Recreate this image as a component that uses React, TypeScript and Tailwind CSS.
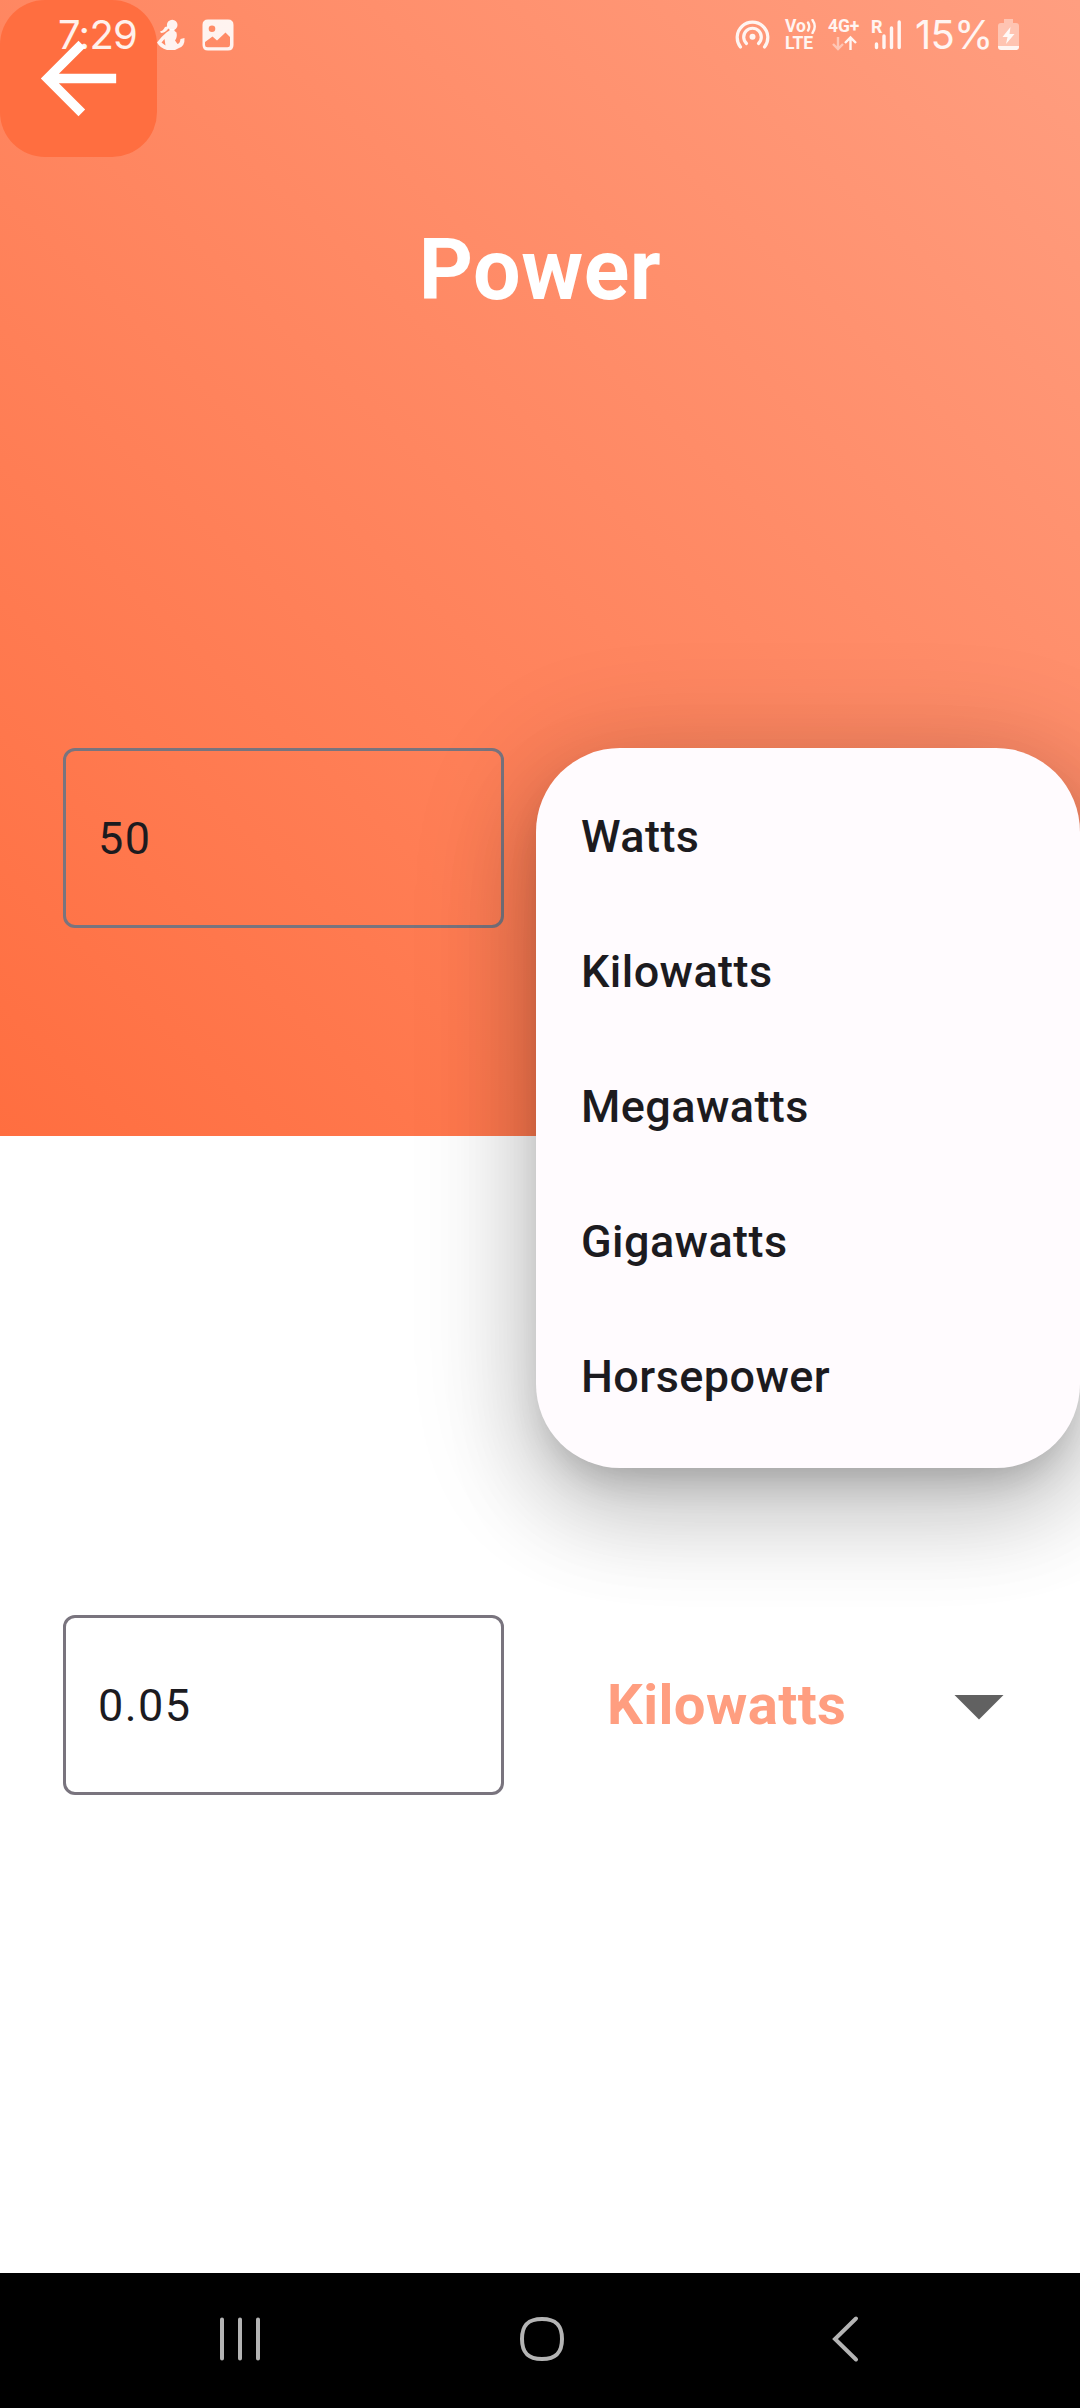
import type { ReactNode } from "react";

const units = ["Watts", "Kilowatts", "Megawatts", "Gigawatts", "Horsepower"];

function StatusBar() {
  return (
    <div className="absolute inset-x-0 top-0 z-20 flex h-[69px] items-center text-white/90">
      <span className="ml-[58px] w-[81px] whitespace-nowrap font-[Inter] text-[40px] leading-none font-normal tracking-[-0.7px]">
        7:29
      </span>
      <svg className="ml-[17px] h-[34px] w-[30px]" viewBox="0 0 30 34" fill="currentColor">
        <circle cx="16.200" cy="7" r="5.300" />
        <path d="M13 8 9 9Q7 13 4 13.500L5 15Q9 15 12 11Z" />
        <path d="M14 11H18Q18 13 20.500 14.500Q21.500 19 19 22.500L21.500 26Q24 25.500 24.500 21L28.500 20Q29 28 23 30L19 32H11Q4 30 1 24.500Q5 19 11 14Q14 13 14 11ZM8.500 21 5.500 24.500 9.500 27.500Z" fillRule="evenodd" />
      </svg>
      <svg className="ml-[16px] h-[32px] w-[32px]" viewBox="0 0 32 32" fill="currentColor">
        <path
          fillRule="evenodd"
          d="M6 0.5H26Q31.5 .5 31.5 6V26Q31.5 31.5 26 31.5H6Q.5 31.5 .5 26V6Q.5 .5 6 .5ZM10 6.5A3.3 3.3 0 1 0 10 13.1A3.3 3.3 0 1 0 10 6.5ZM3 23V26Q3 28.3 5.5 28.3H25.500Q28 28.300 28 26V18L23.500 13.500 15 21.500 10.500 17.500Z"
        />
      </svg>

      <svg className="ml-[501px] h-[32px] w-[36px]" viewBox="0 0 36 32" fill="none" stroke="currentColor" strokeWidth="3.2" strokeLinecap="round">
        <path d="M5.500 28A15.300 15.300 0 1 1 29.500 28" />
        <path d="M11.500 24.500A8.800 8.800 0 1 1 23.500 24.500" />
        <circle cx="17.500" cy="17.700" r="3" fill="currentColor" stroke="none" />
      </svg>
      <div className="ml-[14px] flex h-[33px] w-[34px] flex-col font-[Roboto] text-[17.5px] leading-[17px] font-bold">
        <span className="flex">
          Vo
          <svg className="mt-px h-[15px] w-[11px]" viewBox="0 0 11 15" fill="none" stroke="currentColor" strokeWidth="2.400" strokeLinecap="round">
            <path d="M2 3.500Q4.500 7.500 2 11.500M6.500 1Q11 7.500 6.500 14" />
          </svg>
        </span>
        <span>LTE</span>
      </div>
      <div className="ml-[9px] flex h-[33px] w-[34px] flex-col font-[Roboto] text-[17.5px] leading-[17px] font-bold tracking-[-0.1px]">
        <span>4G+</span>
        <svg className="ml-[4px] h-[16px] w-[25px]" viewBox="0 0 25 16" fill="none" stroke="currentColor" strokeWidth="2.400">
          <path d="M6 2V14M1 9 6 14 11 9" opacity=".5" />
          <path d="M18.500 15V3M13 8 18.500 2.500 24 8" />
        </svg>
      </div>
      <div className="relative ml-[9px] h-[32px] w-[32px]">
        <span className="absolute -top-px left-0 font-[Roboto] text-[18px] leading-[17px] font-bold">R</span>
        <svg className="h-full w-full" viewBox="0 0 32 32" stroke="currentColor" strokeWidth="3.400" strokeLinecap="round">
          <path d="M5.500 25V28.500M13 17V28.500M20.500 9V28.500M28.200 3V28.500" />
        </svg>
      </div>
      <span className="ml-[12px] w-[76px] whitespace-nowrap font-[Inter] text-[40px] leading-none font-normal tracking-[-0.8px]">
        15%
      </span>
      <svg className="ml-[7px] h-[32px] w-[21px]" viewBox="0 0 21 32" fill="currentColor">
        <path opacity=".45" d="M6 0H15V4H18Q21 4 21 7V27H0V7Q0 4 3 4H6Z" />
        <path d="M0 27H21V28Q21 31 18 31H3Q0 31 0 28Z" />
        <path d="M12.500 8 4.500 18H9.500L8 25 16.500 15H11.500Z" />
      </svg>
    </div>
  );
}

function ValueField({ children }: { children: ReactNode }) {
  return (
    <div className="flex h-[180px] w-[441px] items-center rounded-[12px] border-[3px] border-[#79747e] pl-[32px] text-[45px] leading-none tracking-[1.4px] text-[#1c1b1f]">
      {children}
    </div>
  );
}

function UnitMenu() {
  return (
    <ul className="absolute top-[748px] right-0 z-10 flex h-[720px] w-[544px] flex-col rounded-[84px] bg-[#fffbfe] py-[21px] pl-[45px] text-[45px] font-medium tracking-[0.42px] text-[#1c1b1f] shadow-[0_22px_38px_-14px_rgba(0,0,0,0.2),0_45px_90px_6px_rgba(0,0,0,0.14),0_17px_116px_17px_rgba(0,0,0,0.14)]">
      {units.map((unit) => (
        <li key={unit} className="flex h-[135px] items-center leading-none">
          {unit}
        </li>
      ))}
    </ul>
  );
}

function NavBar() {
  return (
    <nav className="flex h-[135px] items-center bg-black pb-[3px] text-[#b4b4b4]">
      <svg className="ml-[216px] h-[48px] w-[48px]" viewBox="0 0 48 48" stroke="currentColor" strokeWidth="4" strokeLinecap="round">
        <path d="M6 4.500V43.500M24 4.500V43.500M42 4.500V43.500" />
      </svg>
      <svg className="ml-[254px] h-[48px] w-[48px]" viewBox="0 0 48 48" fill="none" stroke="currentColor" strokeWidth="4">
        <path d="M24 4C38 4 44 10 44 24S38 44 24 44 4 38 4 24 10 4 24 4Z" />
      </svg>
      <svg className="ml-[255px] h-[48px] w-[48px]" viewBox="0 0 48 48" fill="none" stroke="currentColor" strokeWidth="4" strokeLinecap="round">
        <path d="M35 3.500 14 24 35 44.500" />
      </svg>
    </nav>
  );
}

export default function App() {
  return (
    <div className="relative flex h-[2408px] w-[1080px] flex-col overflow-hidden bg-white font-[Roboto,sans-serif]">
      <StatusBar />
      <header className="flex h-[1136px] flex-col bg-[linear-gradient(43.54deg,#ff6e40,#ff9e80)]">
        <button className="flex h-[157px] w-[157px] items-center justify-center rounded-[45px] bg-[#ff6e40] text-white" aria-label="Back">
          <svg className="h-[113px] w-[113px]" viewBox="0 0 24 24" fill="currentColor">
            <path d="M20 11H7.830l5.590-5.590L12 4l-8 8 8 8 1.410-1.410L7.830 13H20v-2z" />
          </svg>
        </button>
        <h1 className="mt-[64px] text-center text-[84.4px] leading-[100px] font-bold tracking-[0.5px] text-white">Power</h1>
        <div className="mt-[427px] pl-[63px]">
          <ValueField>50</ValueField>
        </div>
      </header>
      <main className="flex-1 pt-[479px] pl-[63px]">
        <div className="flex items-center">
          <ValueField>0.05</ValueField>
          <div className="ml-[103px] flex w-[397px] items-center justify-between text-[56.25px] leading-none font-bold tracking-[0.42px] text-[#ff9e80]">
            Kilowatts
            <svg className="mt-[3px] h-[26px] w-[50px]" viewBox="0 0 50 26" fill="#616161">
              <path d="M.500 1H49.500L25 25.500Z" />
            </svg>
          </div>
        </div>
      </main>
      <UnitMenu />
      <NavBar />
    </div>
  );
}
